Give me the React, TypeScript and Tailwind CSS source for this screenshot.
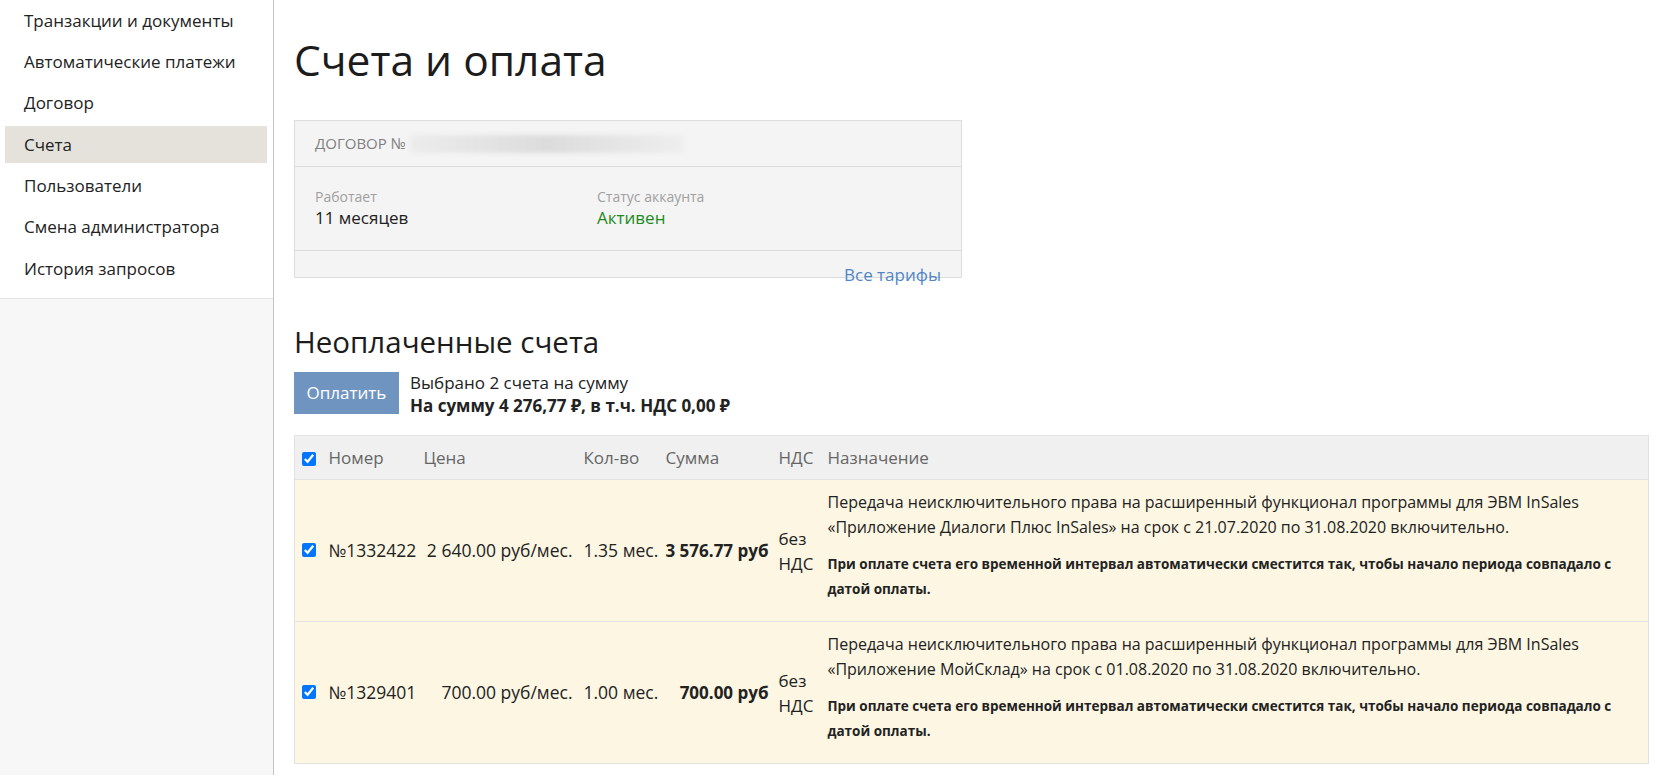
import React from 'react'

const menu = [
  'Транзакции и документы',
  'Автоматические платежи',
  'Договор',
  'Счета',
  'Пользователи',
  'Смена администратора',
  'История запросов',
]

const invoices = [
  {
    id: '№1332422',
    price: '2 640.00 руб/мес.',
    qty: '1.35 мес.',
    sum: '3 576.77 руб',
    desc: 'Передача неисключительного права на расширенный функционал программы для ЭВМ InSales «Приложение Диалоги Плюс InSales» на срок с 21.07.2020 по 31.08.2020 включительно.',
  },
  {
    id: '№1329401',
    price: '700.00 руб/мес.',
    qty: '1.00 мес.',
    sum: '700.00 руб',
    desc: 'Передача неисключительного права на расширенный функционал программы для ЭВМ InSales «Приложение МойСклад» на срок с 01.08.2020 по 31.08.2020 включительно.',
  },
]

function Sidebar() {
  return (
    <aside className="w-[274px] shrink-0 border-r border-[#c4c4c4] flex flex-col min-h-screen">
      <nav className="pb-[9px]">
        {menu.map(item => (
          <div key={item} className="h-[41.3px] py-[2px] pl-[5px] pr-[6px]">
            <div
              className={
                'h-full flex items-center pl-[19px] text-[17px] text-[#222] ' +
                (item === 'Счета' ? 'bg-[#e4e2da]' : '')
              }
            >
              {item}
            </div>
          </div>
        ))}
      </nav>
      <div className="flex-1 bg-[#f7f7f7] border-t border-[#e6e6e6]" />
    </aside>
  )
}

function ContractCard() {
  return (
    <div className="w-[668px] mt-[30px] bg-[#f4f4f4] border border-[#dcdcdc]">
      <div className="h-[46px] flex items-center px-[20px] border-b border-[#dcdcdc]">
        <span className="text-[15px] text-[#808080] uppercase">Договор №</span>
        <div className="ml-[4px] w-[273px] h-[18px] bg-gradient-to-r from-[#ececec] via-[#dcdcdc] to-[#eeeeee] blur-[2px]" />
      </div>
      <div className="h-[84px] flex px-[20px] pt-[20px] border-b border-[#dcdcdc]">
        <div className="w-[282px]">
          <div className="text-[14px] leading-[20px] text-[#a0a0a0]">Работает</div>
          <div className="text-[17px] leading-[22px] text-[#222]">11 месяцев</div>
        </div>
        <div>
          <div className="text-[14px] leading-[20px] text-[#a0a0a0]">Статус аккаунта</div>
          <div className="text-[17px] leading-[22px] text-[#1f8a1f]">Активен</div>
        </div>
      </div>
      <div className="h-[26px] flex justify-end pr-[20px]">
        <a className="mt-[12px] text-[17px] leading-[24px] text-[#4f86c6] h-[24px]">Все тарифы</a>
      </div>
    </div>
  )
}

function InvoicesTable() {
  return (
    <table className="mt-[18px] w-[1355px] table-fixed border-collapse border border-[#e2e2e2] text-[17.5px] text-[#222]">
      <colgroup>
        <col className="w-[28px]" />
        <col className="w-[95px]" />
        <col className="w-[160px]" />
        <col className="w-[82px]" />
        <col className="w-[114px]" />
        <col className="w-[48px]" />
        <col />
      </colgroup>
      <thead>
        <tr className="h-[44px] bg-[#f0f0f0] text-[17px] text-[#666] border-b border-[#e2e2e2]">
          <th className="pl-[7px] text-left font-normal align-middle">
            <input type="checkbox" defaultChecked className="w-[14px] h-[14px] align-middle accent-[#0075ff]" />
          </th>
          <th className="pl-[6px] text-left font-normal">Номер</th>
          <th className="pl-[6px] text-left font-normal">Цена</th>
          <th className="pl-[6px] text-left font-normal">Кол-во</th>
          <th className="pl-[6px] text-left font-normal">Сумма</th>
          <th className="pl-[5px] text-left font-normal">НДС</th>
          <th className="pl-[6px] text-left font-normal">Назначение</th>
        </tr>
      </thead>
      <tbody>
        {invoices.map(inv => (
          <tr key={inv.id} className="h-[142px] bg-[#fcf6e3] border-b border-[#e2e2e2]">
            <td className="pl-[7px] pb-[6px] align-middle">
              <input type="checkbox" defaultChecked className="w-[14px] h-[14px] align-middle accent-[#0075ff]" />
            </td>
            <td className="pl-[6px] align-middle">{inv.id}</td>
            <td className="pr-[5px] text-right align-middle whitespace-nowrap">{inv.price}</td>
            <td className="pl-[6px] align-middle whitespace-nowrap">{inv.qty}</td>
            <td className="pr-[5px] text-right align-middle font-bold text-[17px] whitespace-nowrap">{inv.sum}</td>
            <td className="pl-[5px] align-middle text-[17px] leading-[25px]">
              без
              <br />
              НДС
            </td>
            <td className="pl-[6px] pr-[10px] pt-[10px] pb-[19px] align-top text-[16px]">
              <p className="leading-[25px]">{inv.desc}</p>
              <p className="mt-[12px] text-[13.5px] font-bold leading-[25px]">
                При оплате счета его временной интервал автоматически сместится так, чтобы начало периода совпадало с датой оплаты.
              </p>
            </td>
          </tr>
        ))}
      </tbody>
    </table>
  )
}

export default function App() {
  return (
    <div className="flex min-h-screen bg-white text-[#222]" style={{ fontFamily: '"Open Sans", "Noto Sans", sans-serif' }}>
      <Sidebar />
      <main className="flex-1 pl-[20px] pt-[30px]">
        <h1 className="text-[42.5px] leading-[60px] text-[#1c1c1c]">Счета и оплата</h1>
        <ContractCard />
        <h2 className="mt-[44px] text-[29.5px] leading-[40px] text-[#1c1c1c]">Неоплаченные счета</h2>
        <div className="mt-[10px] flex items-start">
          <button className="w-[105px] h-[42px] bg-[#7094c0] text-white text-[17px]">Оплатить</button>
          <div className="ml-[11px] -mt-[1px]">
            <div className="text-[17px] leading-[24px]">Выбрано 2 счета на сумму</div>
            <div className="text-[17px] leading-[22px] font-bold">На сумму 4 276,77 ₽, в т.ч. НДС 0,00 ₽</div>
          </div>
        </div>
        <InvoicesTable />
      </main>
    </div>
  )
}
